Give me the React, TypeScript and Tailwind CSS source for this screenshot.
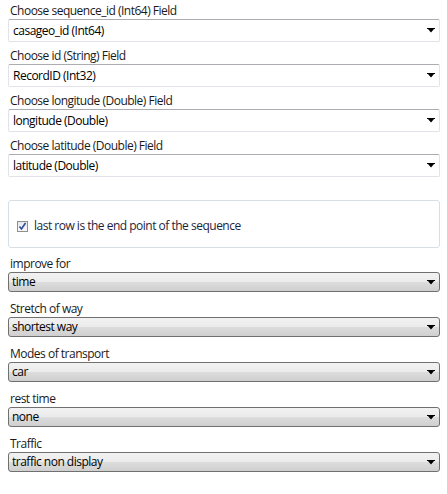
import React from 'react';

const Arrow: React.FC = () => (
    <svg width="8" height="5" viewBox="0 0 8 5" className="shrink-0">
        <path d="M0 0H8V1H7L4 4.5L1 1H0Z" fill="#000" />
    </svg>
);

const FieldSelect: React.FC<{ label: string; value: string }> = ({ label, value }) => (
    <div className="mb-[6px]">
        <div className="h-[16px] leading-[16px] pl-[2px] text-[#1a1a1a]">{label}</div>
        <div className="h-[23px] flex items-center justify-between bg-white border border-[#e2e3ea] border-t-[#abadb3] rounded-[2px] pl-[4px] pr-[4px]">
            <span className="text-black">{value}</span>
            <Arrow />
        </div>
    </div>
);

const OptionSelect: React.FC<{ label: string; value: string }> = ({ label, value }) => (
    <div className="mb-[9px]">
        <div className="h-[16px] leading-[16px] pl-[2px] text-[#1a1a1a]">{label}</div>
        <div className="h-[20px] flex items-center justify-between border border-[#707070] rounded-[3px] pl-[3px] pr-[4px] bg-[linear-gradient(to_bottom,#f2f2f2_0%,#ebebeb_50%,#dddddd_50%,#cfcfcf_100%)]">
            <span className="text-black">{value}</span>
            <Arrow />
        </div>
    </div>
);

export default function App() {
    return (
        <div className="w-[447px] h-[494px] bg-white pl-[8px] pr-[7px] pt-[3px] flex flex-col text-[12px] font-['Open_Sans',sans-serif] tracking-[-0.5px]">
            <FieldSelect label="Choose sequence_id (Int64) Field" value="casageo_id (Int64)" />
            <FieldSelect label="Choose id (String) Field" value="RecordID (Int32)" />
            <FieldSelect label="Choose longitude (Double) Field" value="longitude (Double)" />
            <FieldSelect label="Choose latitude (Double) Field" value="latitude (Double)" />

            <div className="mt-[17px] h-[48px] border border-[#d5dfe5] rounded-[3px] flex items-center pl-[8px] pt-[4px] mb-[8px]">
                <div className="w-[11px] h-[11px] border border-[#8f8f8f] bg-[linear-gradient(to_bottom,#e8e8e8,#f8f8f8)] flex items-center justify-center">
                    <svg width="9" height="9" viewBox="0 0 9 9">
                        <path d="M1.5 4.5L3.5 7L7.5 1" stroke="#2d4ea0" strokeWidth="1.6" fill="none" />
                    </svg>
                </div>
                <span className="ml-[6px] text-[#1e1e3c]">last row is the end point of the sequence</span>
            </div>

            <OptionSelect label="improve for" value="time" />
            <OptionSelect label="Stretch of way" value="shortest way" />
            <OptionSelect label="Modes of transport" value="car" />
            <OptionSelect label="rest time" value="none" />
            <OptionSelect label="Traffic" value="traffic non display" />
        </div>
    );
}
